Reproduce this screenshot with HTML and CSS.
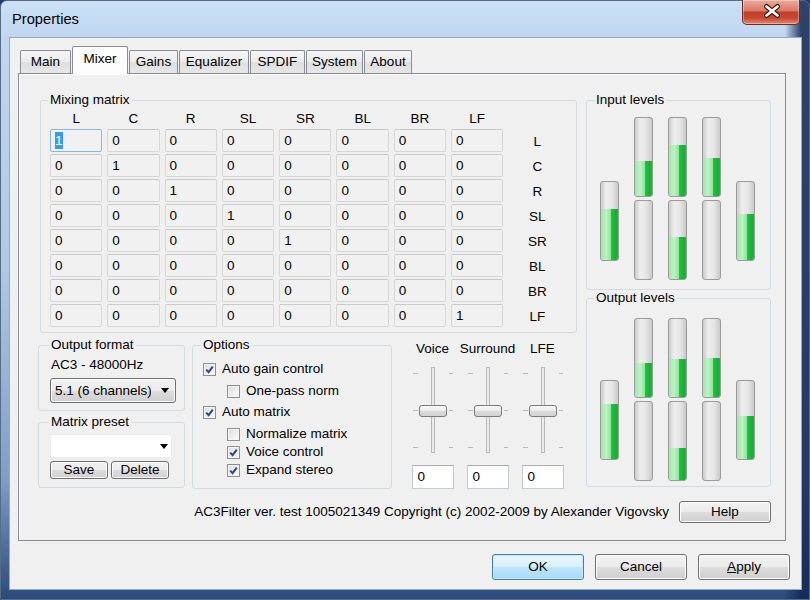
FILE: index.html
```html
<!DOCTYPE html>
<html lang="en">
<head>
    <meta charset="UTF-8">
    <title>Properties</title>
    <link rel="stylesheet" href="styles.css">
</head>
<body>
<div class="window">
    <div class="titlebar">
        <span class="title">Properties</span>
        <div class="close">
            <svg width="58" height="24" viewBox="0 0 58 24">
                <path d="M23.5 7.5 L34.5 16.5 M34.5 7.5 L23.5 16.5" stroke="#4a1d15" stroke-width="5" stroke-linecap="round"/>
                <path d="M23.5 7.5 L34.5 16.5 M34.5 7.5 L23.5 16.5" stroke="#fff" stroke-width="2.6" stroke-linecap="round"/>
            </svg>
        </div>
    </div>

    <div class="client">
        <div class="tabs">
            <div class="tab w-main">Main</div>
            <div class="tab w-mixer active">Mixer</div>
            <div class="tab w-gains">Gains</div>
            <div class="tab w-eq">Equalizer</div>
            <div class="tab w-spdif">SPDIF</div>
            <div class="tab w-system">System</div>
            <div class="tab w-about">About</div>
        </div>

        <div class="panel">
            <div class="panel-main">
                <div class="left-col">
                    <fieldset class="group matrix">
                        <legend>Mixing matrix</legend>
                        <div class="matrix-grid">
                            <span class="head">L</span><span class="head">C</span><span class="head">R</span><span class="head">SL</span>
                            <span class="head">SR</span><span class="head">BL</span><span class="head">BR</span><span class="head">LF</span><span></span>

                            <div class="cell focus"><span class="sel">1</span></div><div class="cell">0</div><div class="cell">0</div><div class="cell">0</div>
                            <div class="cell">0</div><div class="cell">0</div><div class="cell">0</div><div class="cell">0</div><span class="row-label">L</span>

                            <div class="cell">0</div><div class="cell">1</div><div class="cell">0</div><div class="cell">0</div>
                            <div class="cell">0</div><div class="cell">0</div><div class="cell">0</div><div class="cell">0</div><span class="row-label">C</span>

                            <div class="cell">0</div><div class="cell">0</div><div class="cell">1</div><div class="cell">0</div>
                            <div class="cell">0</div><div class="cell">0</div><div class="cell">0</div><div class="cell">0</div><span class="row-label">R</span>

                            <div class="cell">0</div><div class="cell">0</div><div class="cell">0</div><div class="cell">1</div>
                            <div class="cell">0</div><div class="cell">0</div><div class="cell">0</div><div class="cell">0</div><span class="row-label">SL</span>

                            <div class="cell">0</div><div class="cell">0</div><div class="cell">0</div><div class="cell">0</div>
                            <div class="cell">1</div><div class="cell">0</div><div class="cell">0</div><div class="cell">0</div><span class="row-label">SR</span>

                            <div class="cell">0</div><div class="cell">0</div><div class="cell">0</div><div class="cell">0</div>
                            <div class="cell">0</div><div class="cell">0</div><div class="cell">0</div><div class="cell">0</div><span class="row-label">BL</span>

                            <div class="cell">0</div><div class="cell">0</div><div class="cell">0</div><div class="cell">0</div>
                            <div class="cell">0</div><div class="cell">0</div><div class="cell">0</div><div class="cell">0</div><span class="row-label">BR</span>

                            <div class="cell">0</div><div class="cell">0</div><div class="cell">0</div><div class="cell">0</div>
                            <div class="cell">0</div><div class="cell">0</div><div class="cell">0</div><div class="cell">1</div><span class="row-label">LF</span>
                        </div>
                    </fieldset>

                    <div class="lower">
                        <div class="format-col">
                            <fieldset class="group format">
                                <legend>Output format</legend>
                                <div class="format-text">AC3 - 48000Hz</div>
                                <div class="combo combo-button">
                                    <span class="combo-text">5.1 (6 channels)</span>
                                    <svg class="arrow" width="8" height="5" viewBox="0 0 8 5"><polygon points="0,0 8,0 4,5" fill="#000"/></svg>
                                </div>
                            </fieldset>
                            <fieldset class="group preset">
                                <legend>Matrix preset</legend>
                                <div class="combo combo-edit">
                                    <span class="combo-text"></span>
                                    <svg class="arrow" width="8" height="5" viewBox="0 0 8 5"><polygon points="0,0 8,0 4,5" fill="#000"/></svg>
                                </div>
                                <div class="preset-buttons">
                                    <div class="btn small">Save</div>
                                    <div class="btn small">Delete</div>
                                </div>
                            </fieldset>
                        </div>

                        <fieldset class="group options">
                            <legend>Options</legend>
                            <div class="opt r1"><span class="check on"><svg viewBox="0 0 13 13"><path d="M3.2 6.6 L5.6 9.2 L9.8 3.6"/></svg></span>Auto gain control</div>
                            <div class="opt sub r2"><span class="check"></span>One-pass norm</div>
                            <div class="opt r3"><span class="check on"><svg viewBox="0 0 13 13"><path d="M3.2 6.6 L5.6 9.2 L9.8 3.6"/></svg></span>Auto matrix</div>
                            <div class="opt sub r4"><span class="check"></span>Normalize matrix</div>
                            <div class="opt sub"><span class="check on"><svg viewBox="0 0 13 13"><path d="M3.2 6.6 L5.6 9.2 L9.8 3.6"/></svg></span>Voice control</div>
                            <div class="opt sub"><span class="check on"><svg viewBox="0 0 13 13"><path d="M3.2 6.6 L5.6 9.2 L9.8 3.6"/></svg></span>Expand stereo</div>
                        </fieldset>

                        <div class="sliders">
                            <div class="slider-col">
                                <span class="slider-label">Voice</span>
                                <svg class="slider" width="55" height="90" viewBox="0 0 55 90">
                                    <use href="#slider"/>
                                </svg>
                                <div class="edit">0</div>
                            </div>
                            <div class="slider-col">
                                <span class="slider-label">Surround</span>
                                <svg class="slider" width="55" height="90" viewBox="0 0 55 90">
                                    <use href="#slider"/>
                                </svg>
                                <div class="edit">0</div>
                            </div>
                            <div class="slider-col">
                                <span class="slider-label">LFE</span>
                                <svg class="slider" width="55" height="90" viewBox="0 0 55 90">
                                    <use href="#slider"/>
                                </svg>
                                <div class="edit">0</div>
                            </div>
                        </div>
                    </div>
                </div>

                <div class="right-col">
                    <fieldset class="group levels in">
                        <legend>Input levels</legend>
                        <div class="meters">
                            <div class="meter single"><div class="fill" style="height:51px"></div></div>
                            <div class="stack">
                                <div class="meter"><div class="fill" style="height:35px"></div></div>
                                <div class="meter"><div class="fill" style="height:0"></div></div>
                            </div>
                            <div class="stack">
                                <div class="meter"><div class="fill" style="height:51px"></div></div>
                                <div class="meter"><div class="fill" style="height:42px"></div></div>
                            </div>
                            <div class="stack">
                                <div class="meter"><div class="fill" style="height:38px"></div></div>
                                <div class="meter"><div class="fill" style="height:0"></div></div>
                            </div>
                            <div class="meter single"><div class="fill" style="height:46px"></div></div>
                        </div>
                    </fieldset>
                    <fieldset class="group levels out">
                        <legend>Output levels</legend>
                        <div class="meters">
                            <div class="meter single"><div class="fill" style="height:55px"></div></div>
                            <div class="stack">
                                <div class="meter"><div class="fill" style="height:34px"></div></div>
                                <div class="meter"><div class="fill" style="height:0"></div></div>
                            </div>
                            <div class="stack">
                                <div class="meter"><div class="fill" style="height:38px"></div></div>
                                <div class="meter"><div class="fill" style="height:32px"></div></div>
                            </div>
                            <div class="stack">
                                <div class="meter"><div class="fill" style="height:39px"></div></div>
                                <div class="meter"><div class="fill" style="height:0"></div></div>
                            </div>
                            <div class="meter single"><div class="fill" style="height:43px"></div></div>
                        </div>
                    </fieldset>
                </div>
            </div>

            <div class="footer">
                <span class="copyright">AC3Filter ver. test 1005021349 Copyright (c) 2002-2009 by Alexander Vigovsky</span>
                <div class="btn help">Help</div>
            </div>
        </div>

        <div class="buttons">
            <div class="btn big default">OK</div>
            <div class="btn big">Cancel</div>
            <div class="btn big"><u>A</u>pply</div>
        </div>
    </div>
</div>

<svg width="0" height="0" class="defs">
    <defs>
        <linearGradient id="thumbGrad" x1="0" y1="0" x2="0" y2="1">
            <stop offset="0" stop-color="#fbfbfb"/>
            <stop offset="0.5" stop-color="#eaeaea"/>
            <stop offset="0.5" stop-color="#dcdcdc"/>
            <stop offset="1" stop-color="#d2d2d2"/>
        </linearGradient>
        <g id="slider">
            <rect x="26.5" y="2.5" width="3" height="85" fill="#e9ebeb" stroke="#b9b9b9"/>
            <g stroke="#b8b8b8" stroke-width="1">
                <path d="M8 8.5 H13 M44 8.5 H48"/>
                <path d="M8 45.5 H13 M44 45.5 H48"/>
                <path d="M8 82.5 H13 M44 82.5 H48"/>
            </g>
            <rect x="14.5" y="40.5" width="27" height="11" rx="2.5" fill="url(#thumbGrad)" stroke="#7a7a7a"/>
        </g>
    </defs>
</svg>
</body>
</html>
```

FILE: styles.css
```css
body {
    margin: 0;
    padding: 0;
    width: 810px;
    height: 600px;
    overflow: hidden;
    background: #1d3a68;
    font-family: "Liberation Sans", Arial, sans-serif;
    font-size: 13.5px;
    line-height: 16px;
    color: #000;
}
.defs {
    position: absolute;
}
.window {
    width: 810px;
    height: 600px;
    box-sizing: border-box;
    display: flex;
    flex-direction: column;
    border-radius: 7px 7px 0 0;
    border: 1px solid #5a6a80;
    background:
        linear-gradient(to right, rgba(255,255,255,0) 97%, rgba(18,40,84,0.85) 99%),
        linear-gradient(to bottom, #cbe0f5 0, #bfd7f0 36px, #aec8e6 45%, #7f9dc6 80%, #2a4a7c 100%);
}
.titlebar {
    height: 36px;
    display: flex;
    align-items: flex-start;
    flex-shrink: 0;
}
.title {
    margin: 10px 0 0 11px;
    font-size: 14.7px;
    line-height: 17px;
}
.close {
    margin-left: auto;
    margin-right: 9px;
    margin-top: -1px;
    width: 58px;
    height: 25px;
    box-sizing: border-box;
    border: 1px solid #6d2c22;
    border-top: none;
    border-radius: 0 0 5px 5px;
    background: linear-gradient(to bottom, #e9ab9c 0%, #d97a66 45%, #c2402a 50%, #c8472f 75%, #de8a6e 100%);
    box-shadow: inset 0 0 0 1px rgba(255,255,255,0.35);
}
.close svg {
    display: block;
    margin-top: -1px;
}

.client {
    margin: 0 7px 0 8px;
    height: 553px;
    box-sizing: border-box;
    border: 1px solid #97a9bf;
    background: #f0f0f0;
    padding: 8px 11px 0 8px;
}

/* tabs */
.tabs {
    display: flex;
    align-items: flex-end;
    height: 28px;
    margin-bottom: -1px;
    padding-left: 2px;
    gap: 1px;
}
.tab {
    height: 23px;
    margin-bottom: 1px;
    box-sizing: border-box;
    border: 1px solid #898c95;
    border-bottom: none;
    border-radius: 2px 2px 0 0;
    background: linear-gradient(to bottom, #f5f5f5 0%, #ebebeb 50%, #dfdfdf 51%, #e6e6e6 100%);
    text-align: center;
    line-height: 22px;
}
.tab.active {
    height: 28px;
    margin-bottom: 0;
    background: #fdfdfd;
    line-height: 24px;
    position: relative;
    z-index: 1;
}
.w-main { width: 51px; }
.w-mixer { width: 56px; }
.w-gains { width: 49px; }
.w-eq { width: 70px; }
.w-spdif { width: 55px; }
.w-system { width: 57px; }
.w-about { width: 48px; }

.panel {
    width: 768px;
    height: 468px;
    box-sizing: border-box;
    border: 1px solid #898c95;
    background: #f0f0f0;
    box-shadow: inset 1px 1px 0 #fff;
    padding: 18px 14px 0 19px;
}
.panel-main {
    display: flex;
    gap: 8px;
}
.left-col {
    width: 540px;
}
.right-col {
    width: 185px;
    display: flex;
    flex-direction: column;
}

/* group boxes */
.group {
    margin: 0;
    min-inline-size: 0;
    border: 1px solid #d3dbe1;
    border-radius: 3px;
    padding: 0;
}
.group legend {
    padding: 0 2px;
    margin-left: -2px;
    line-height: 16px;
}

.matrix {
    margin-left: 2px;
    width: 537px;
    box-sizing: border-box;
    padding: 0 10px 5px 9px;
}
.matrix-grid {
    display: grid;
    grid-template-columns: repeat(8, 52.3px) 58px;
    grid-template-rows: 19px repeat(8, 23px);
    column-gap: 5px;
    row-gap: 2px;
}
.head {
    text-align: center;
    align-self: end;
}
.cell {
    box-sizing: border-box;
    border: 1px solid #d6d6d6;
    border-top-color: #c9c9c9;
    border-radius: 2px;
    background: #f1f1f1;
    padding-left: 4px;
    line-height: 21px;
}
.cell.focus {
    border-color: #86b7e6;
}
.sel {
    background: #3399ff;
    color: #fff;
    padding: 1px 0;
}
.row-label {
    text-align: center;
    align-self: center;
    padding-top: 3px;
}

.lower {
    display: flex;
    margin-top: 4px;
}
.format-col {
    width: 147px;
    display: flex;
    flex-direction: column;
    gap: 3px;
    margin-right: 7px;
}
.format {
    padding: 3px 8px 7px 12px;
}
.format-text {
    line-height: 18px;
}
.combo {
    display: flex;
    align-items: center;
    box-sizing: border-box;
    margin-left: -1px;
}
.combo-text {
    white-space: nowrap;
    overflow: hidden;
}
.combo-button {
    margin-top: 4px;
    width: 126px;
    height: 25px;
    border: 1px solid #707070;
    border-radius: 3px;
    background: linear-gradient(to bottom, #f2f2f2 0%, #ebebeb 50%, #dddddd 51%, #cfcfcf 100%);
    box-shadow: inset 0 0 0 1px #fbfbfb;
    padding-left: 4px;
}
.combo-button .combo-text {
    width: 96px;
}
.combo-button .arrow {
    margin-left: 10px;
}
.preset {
    padding: 4px 8px 8px 12px;
}
.combo-edit {
    width: 122px;
    height: 24px;
    background: #fff;
    border: 1px solid #ececec;
    padding-left: 4px;
}
.combo-edit .combo-text {
    width: 105px;
}
.preset-buttons {
    display: flex;
    gap: 3px;
    margin-top: 3px;
    margin-left: -1px;
}

/* buttons */
.btn {
    box-sizing: border-box;
    border: 1px solid #707070;
    border-radius: 3px;
    background: linear-gradient(to bottom, #f2f2f2 0%, #ebebeb 50%, #dddddd 51%, #cfcfcf 100%);
    box-shadow: inset 0 0 0 1px #fcfcfc;
    text-align: center;
}
.btn.small {
    width: 58px;
    height: 18px;
    line-height: 15px;
}
.btn.help {
    width: 92px;
    height: 22px;
    line-height: 19px;
}
.btn.big {
    width: 92px;
    height: 26px;
    line-height: 23px;
}
.btn.default {
    border-color: #3c7fb1;
    background: linear-gradient(to bottom, #eaf6fd 0%, #d9f0fc 50%, #bee6fd 51%, #a7d9f5 100%);
    box-shadow: inset 0 0 0 1px #c9eafc;
}

/* options */
.options {
    width: 200px;
    box-sizing: border-box;
    padding: 7px 4px 8px 10px;
}
.opt {
    display: flex;
    align-items: center;
    height: 18px;
}
.opt.sub {
    padding-left: 24px;
}
.opt.r2, .opt.r4 {
    margin-top: 4px;
}
.opt.r3 {
    margin-top: 3px;
}
.check {
    width: 13px;
    height: 13px;
    box-sizing: border-box;
    border: 1px solid #8e8f8f;
    background: linear-gradient(135deg, #dcdcdc 0%, #f0f0f0 60%, #fbfbfb 100%);
    box-shadow: inset 0 0 0 1px #f4f4f4;
    margin-right: 6px;
    flex-shrink: 0;
}
.check svg {
    display: block;
    width: 13px;
    height: 13px;
    margin: -1px;
}
.check svg path {
    fill: none;
    stroke: #30498a;
    stroke-width: 2.1;
}

/* sliders */
.sliders {
    display: flex;
    margin-left: 13px;
    padding-top: 4px;
}
.slider-col {
    width: 55px;
    display: flex;
    flex-direction: column;
    align-items: center;
}
.slider {
    display: block;
    margin-top: 8px;
}
.edit {
    margin-top: 10px;
    width: 42px;
    height: 24px;
    box-sizing: border-box;
    border: 1px solid #c6cbd1;
    border-top-color: #abadb3;
    background: #fff;
    padding-left: 5px;
    line-height: 22px;
}

/* level meters */
.levels legend {
    margin-left: 7px;
}
.meters {
    display: flex;
    align-items: flex-end;
    gap: 15px;
    padding-left: 13px;
}
.levels.in .meters {
    padding-top: 9px;
    padding-bottom: 9px;
}
.levels.out .meters {
    padding-top: 12px;
    padding-bottom: 5px;
}
.stack {
    display: flex;
    flex-direction: column;
    gap: 3px;
}
.meter {
    width: 19px;
    height: 80px;
    box-sizing: border-box;
    border: 1px solid #9a9a9a;
    border-radius: 3px;
    overflow: hidden;
    display: flex;
    flex-direction: column;
    justify-content: flex-end;
    background: linear-gradient(to right, #cbcbcb 0%, #eeeeee 30%, #e6e6e6 65%, #c9c9c9 100%);
}
.meter.single {
    margin-bottom: 19px;
}
.levels.out .meter.single {
    margin-bottom: 21px;
}
.fill {
    background: linear-gradient(to right, #9fe8a9 0%, #bdf2c4 30%, #93e5a0 56%, #1fc33d 60%, #0fb22d 90%, #22bd3e 100%);
}

/* footer */
.footer {
    display: flex;
    justify-content: flex-end;
    align-items: center;
    margin-top: 12px;
    gap: 10px;
}
.buttons {
    display: flex;
    justify-content: flex-end;
    gap: 11px;
    margin-top: 13px;
}
```
